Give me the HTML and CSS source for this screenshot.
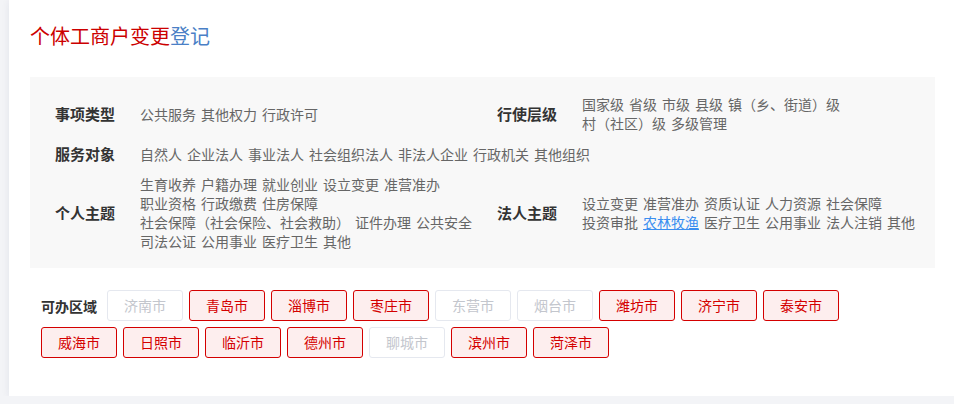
FILE: index.html
```html
<!DOCTYPE html>
<html lang="zh-CN">
<head>
  <meta charset="UTF-8" />
  <meta name="viewport" content="width=device-width, initial-scale=1.0"/>
  <title>个体工商户变更登记</title>
  <link rel="stylesheet" href="styles.css">
</head>
<body>
  <div class="card">
    <h1 class="title">个体工商户变更<span class="title-blue">登记</span></h1>

    <div class="info">
      <div class="info-cell">
        <div class="info-label">事项类型</div>
        <div class="info-values"><span>公共服务</span><span>其他权力</span><span>行政许可</span></div>
      </div>
      <div class="info-cell">
        <div class="info-label">行使层级</div>
        <div class="info-values"><span>国家级</span><span>省级</span><span>市级</span><span>县级</span><span>镇（乡、街道）级</span><span>村（社区）级</span><span>多级管理</span></div>
      </div>
      <div class="info-cell wide">
        <div class="info-label">服务对象</div>
        <div class="info-values"><span>自然人</span><span>企业法人</span><span>事业法人</span><span>社会组织法人</span><span>非法人企业</span><span>行政机关</span><span>其他组织</span></div>
      </div>
      <div class="info-cell">
        <div class="info-label">个人主题</div>
        <div class="info-values"><span>生育收养</span><span>户籍办理</span><span>就业创业</span><span>设立变更</span><span>准营准办</span><span>职业资格</span><span>行政缴费</span><span>住房保障</span><span>社会保障（社会保险、社会救助）</span><span>证件办理</span><span>公共安全</span><span>司法公证</span><span>公用事业</span><span>医疗卫生</span><span>其他</span></div>
      </div>
      <div class="info-cell">
        <div class="info-label">法人主题</div>
        <div class="info-values"><span>设立变更</span><span>准营准办</span><span>资质认证</span><span>人力资源</span><span>社会保障</span><span>投资审批</span><a class="active-link" href="#">农林牧渔</a><span>医疗卫生</span><span>公用事业</span><span>法人注销</span><span>其他</span></div>
      </div>
    </div>

    <div class="area">
      <div class="area-label">可办区域</div>
      <div class="city off">济南市</div>
      <div class="city">青岛市</div>
      <div class="city">淄博市</div>
      <div class="city">枣庄市</div>
      <div class="city off">东营市</div>
      <div class="city off">烟台市</div>
      <div class="city">潍坊市</div>
      <div class="city">济宁市</div>
      <div class="city">泰安市</div>
      <div class="city">威海市</div>
      <div class="city">日照市</div>
      <div class="city">临沂市</div>
      <div class="city">德州市</div>
      <div class="city off">聊城市</div>
      <div class="city">滨州市</div>
      <div class="city">菏泽市</div>
    </div>
  </div>
</body>
</html>
```

FILE: styles.css
```css
body {
  margin: 0;
  background: #f3f4f7;
  font-family: "Noto Sans CJK SC", "Noto Sans", sans-serif;
  overflow: hidden;
}
.card {
  margin-left: 9px;
  width: 905px;
  padding: 22px 21px 38px 21px;
  background: #fff;
  box-shadow: 0 1px 8px rgba(20, 40, 90, 0.08);
}
.title {
  margin: 0 0 27px 0;
  font-size: 20px;
  font-weight: normal;
  line-height: 28px;
  color: #cc0000;
}
.title-blue {
  color: #4a7fc6;
}
.info {
  display: grid;
  grid-template-columns: 442px 428px;
  row-gap: 11px;
  align-items: center;
  padding: 18px 10px 17px 25px;
  background: #f8f8f8;
}
.info-cell {
  display: flex;
  align-items: center;
}
.info-cell.wide {
  grid-column: 1 / -1;
}
.info-label {
  flex: 0 0 85px;
  font-size: 15px;
  font-weight: bold;
  color: #333;
  line-height: 20px;
}
.info-values {
  flex: 1;
  display: flex;
  flex-wrap: wrap;
  column-gap: 5px;
  font-size: 14px;
  line-height: 19px;
  color: #666;
}
.active-link {
  color: #3a8ef0;
  text-decoration: underline;
}
.area {
  display: flex;
  flex-wrap: wrap;
  align-items: center;
  gap: 6px;
  margin-top: 22px;
  padding: 0 40px 0 11px;
}
.area-label {
  width: 60px;
  font-size: 14px;
  font-weight: bold;
  color: #333;
}
.city {
  box-sizing: border-box;
  width: 76px;
  height: 31px;
  line-height: 29px;
  text-align: center;
  font-size: 14px;
  color: #d40000;
  background: #fdeeee;
  border: 1px solid #d40000;
  border-radius: 3px;
}
.city.off {
  color: #c3c6cd;
  background: #fff;
  border-color: #e5e8ef;
}
```
